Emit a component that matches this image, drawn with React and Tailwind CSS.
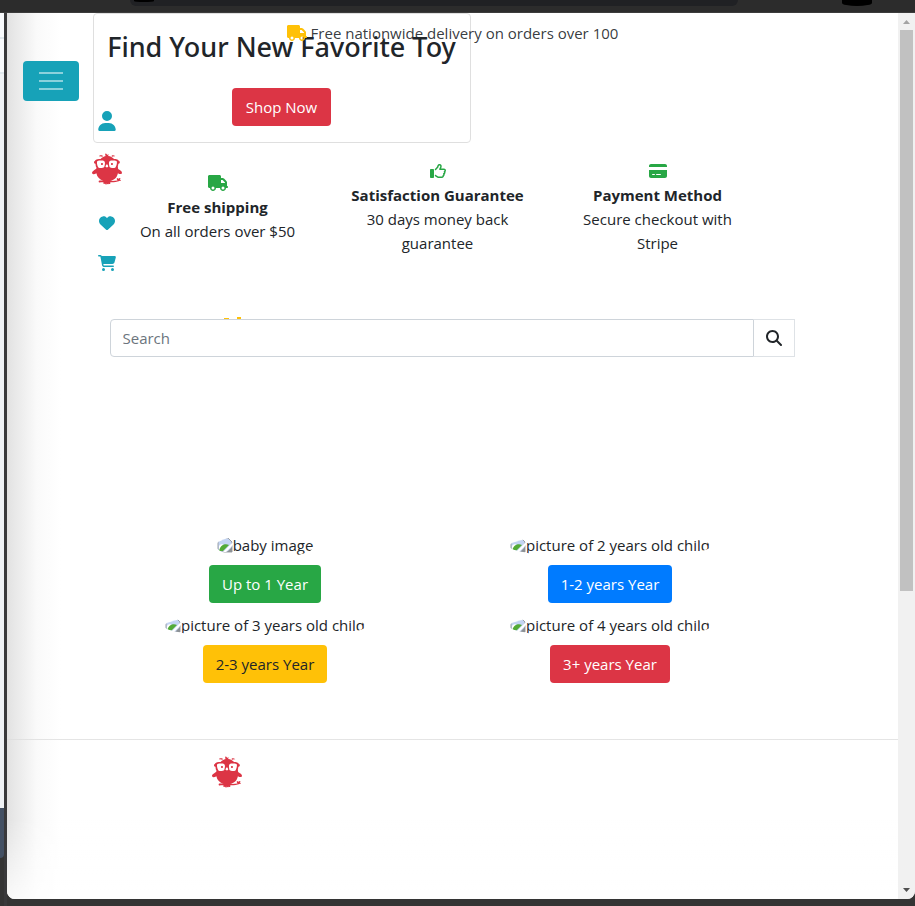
import { FaUser, FaHeart, FaCartShopping, FaTruck, FaCreditCard, FaRegThumbsUp, FaMagnifyingGlass, FaEarlybirds } from "react-icons/fa6";

const features = [
  { icon: FaTruck, title: "Free shipping", text: "On all orders over $50", size: "size-5" },
  { icon: FaRegThumbsUp, title: "Satisfaction Guarantee", text: "30 days money back guarantee", size: "size-4" },
  { icon: FaCreditCard, title: "Payment Method", text: "Secure checkout with Stripe", size: "size-[18px]" },
];

const ages = [
  { alt: "baby image", label: "Up to 1 Year", color: "bg-[#28a745] text-white" },
  { alt: "picture of 2 years old child", label: "1-2 years Year", color: "bg-[#007bff] text-white" },
  { alt: "picture of 3 years old child", label: "2-3 years Year", color: "bg-[#ffc107] text-[#212529]" },
  { alt: "picture of 4 years old child", label: "3+ years Year", color: "bg-[#dc3545] text-white" },
];

function MissingPicture({ alt }) {
  return (
    <span role="img" aria-label={alt} className="flex h-6 items-center overflow-hidden rounded-[50%] px-px pb-[2px] whitespace-nowrap">
      <svg viewBox="0 0 16 16" className="size-4 shrink-0">
        <path d="M1 1h10l4 4v10H1z" fill="#c3d4f3" stroke="#9aa0a6" />
        <path d="M2 9c1.500-2.500 4-2.500 5 0h3l-5 5H2z" fill="#fff" />
        <path d="M2 14c1-5 5-8 10-6l-6 6z" fill="#53ab38" />
        <path d="M16 5 6 15h3l7-7z" fill="#fff" />
        <path d="M10 15l5-5v5z" fill="#8d9296" />
      </svg>
      {alt}
    </span>
  );
}

function Backdrop() {
  return (
    <div className="flex w-[7px] shrink-0 flex-col border-r-3 border-[#39393b]">
      <div className="h-6 bg-[#f8fafc]" />
      <div className="h-[37px] border-y-2 border-[#dfe7ec] bg-[#f8fafc]" />
      <div className="grow bg-[#eff2f5]" />
      <div className="h-[50px] rounded-br-sm bg-[#435063]" />
      <div className="h-12" />
    </div>
  );
}

function Toolbar() {
  return (
    <div className="flex h-[13px] shrink-0 items-start border-b border-[#3c3c3c] bg-[#2c2c2c] pr-[43px] pl-[130px]">
      <div className="h-[6px] w-[608px] rounded-b-full bg-[#202124] pl-1">
        <div className="h-[2px] w-5 rounded-b-[50%] bg-black" />
      </div>
      <div className="ml-auto h-[6px] w-[30px] rounded-b-[50%] bg-black" />
    </div>
  );
}

function Scrollbar() {
  return (
    <div className="flex w-[17px] shrink-0 flex-col items-center bg-[#f1f1f1]">
      <svg viewBox="0 0 17 17" className="size-[17px]"><path d="M5 11h7L8.500 7z" fill="#a3a3a3" /></svg>
      <div className="h-[561px] w-[13px] bg-[#c1c1c1]" />
      <svg viewBox="0 0 17 17" className="mt-auto size-[17px]"><path d="M5 6h7L8.500 10z" fill="#505050" /></svg>
    </div>
  );
}

function SideNav() {
  return (
    <nav className="absolute top-12 left-4 flex items-start gap-[13px] text-[#17a2b8]">
      <button aria-label="Menu" className="flex h-10 w-14 flex-col items-center justify-center gap-[6px] rounded bg-[#17a2b8]">
        <span className="h-[2px] w-6 bg-white/50" />
        <span className="h-[2px] w-6 bg-white/50" />
        <span className="h-[2px] w-6 bg-white/50" />
      </button>
      <div className="flex w-[30px] flex-col items-center pt-[50px]">
        <a href="#account" aria-label="Account"><FaUser className="h-5 w-[18px]" /></a>
        <a href="#home" aria-label="Home" className="mt-[22px] text-[#dc3545]"><FaEarlybirds className="size-8" /></a>
        <a href="#wishlist" aria-label="Wishlist" className="mt-[30px]"><FaHeart className="size-4" /></a>
        <a href="#cart" aria-label="Cart" className="mt-[23px]"><FaCartShopping className="size-[18px]" /></a>
      </div>
    </nav>
  );
}

export default function App() {
  return (
    <div className="flex h-screen flex-col bg-[#343434] font-['Open_Sans','Noto_Sans',sans-serif] text-[15px] leading-6 text-[#212529]">
      <Toolbar />
      <div className="flex min-h-0 grow">
        <Backdrop />
        <div className="mb-[7px] flex min-w-0 grow overflow-hidden rounded-b-lg bg-white">
          <div className="relative flex min-w-0 grow flex-col bg-linear-to-r from-[#e2e2e2] via-[#fafafa] via-[30px] to-white to-[54px]">
            <main className="mx-auto w-full max-w-[720px]">
              <section className="flex h-[130px] w-[378px] flex-col items-center rounded border border-[#dfdfdf] bg-white pt-4">
                <h1 className="font-['Noto_Sans','Open_Sans',sans-serif] text-[27px] leading-[34px] font-medium whitespace-nowrap">Find Your New Favorite Toy</h1>
                <button className="mt-6 h-[38px] rounded bg-[#dc3545] px-[14px] text-white">Shop Now</button>
              </section>

              <section className="mt-4 grid w-[690px] grid-cols-3 items-center px-[15px] text-center">
                {features.map(({ icon: Icon, title, text, size }) => (
                  <div key={title} className="flex flex-col items-center px-6">
                    <span className="flex h-6 items-center text-[#28a745]"><Icon className={size} /></span>
                    <h2 className="font-bold whitespace-nowrap">{title}</h2>
                    <p>{text}</p>
                  </div>
                ))}
              </section>

              <div className="mt-[62px] flex h-[2px] gap-2 pl-[131px]">
                <span className="mt-px w-[5px] bg-[#ffc107]" />
                <span className="w-1 bg-[#ffc107]" />
              </div>
              <form className="mr-[18px] ml-[17px] flex h-[38px]" onSubmit={(e) => e.preventDefault()}>
                <input type="search" aria-label="Search" placeholder="Search" className="min-w-0 grow rounded-l border border-[#ced4da] bg-white px-3 placeholder:text-[#6c757d]" />
                <button aria-label="Search" className="flex w-[41px] items-center justify-center border border-l-0 border-[#dee2e6]"><FaMagnifyingGlass className="size-4" /></button>
              </form>

              <section className="mt-[177px] grid w-[690px] grid-cols-2">
                {ages.map(({ alt, label, color }) => (
                  <div key={alt} className="flex h-20 flex-col items-center">
                    <MissingPicture alt={alt} />
                    <button className={`mt-[7px] h-[38px] rounded px-[13px] ${color}`}>{label}</button>
                  </div>
                ))}
              </section>
            </main>

            <footer className="mt-[45px] grow border-t border-black/10 bg-linear-to-b from-transparent from-50% to-white/80 pt-4">
              <div className="mx-auto w-full max-w-[720px] pl-[118px]">
                <a href="#home" aria-label="Home" className="inline-block text-[#dc3545]"><FaEarlybirds className="size-8" /></a>
              </div>
            </footer>

            <p className="absolute inset-x-0 top-2 flex items-center justify-center gap-1 text-[#212529]/90">
              <FaTruck className="size-5 text-[#ffc107]" />
              Free nationwide delivery on orders over 100
            </p>
            <SideNav />
          </div>
          <Scrollbar />
        </div>
      </div>
    </div>
  );
}
